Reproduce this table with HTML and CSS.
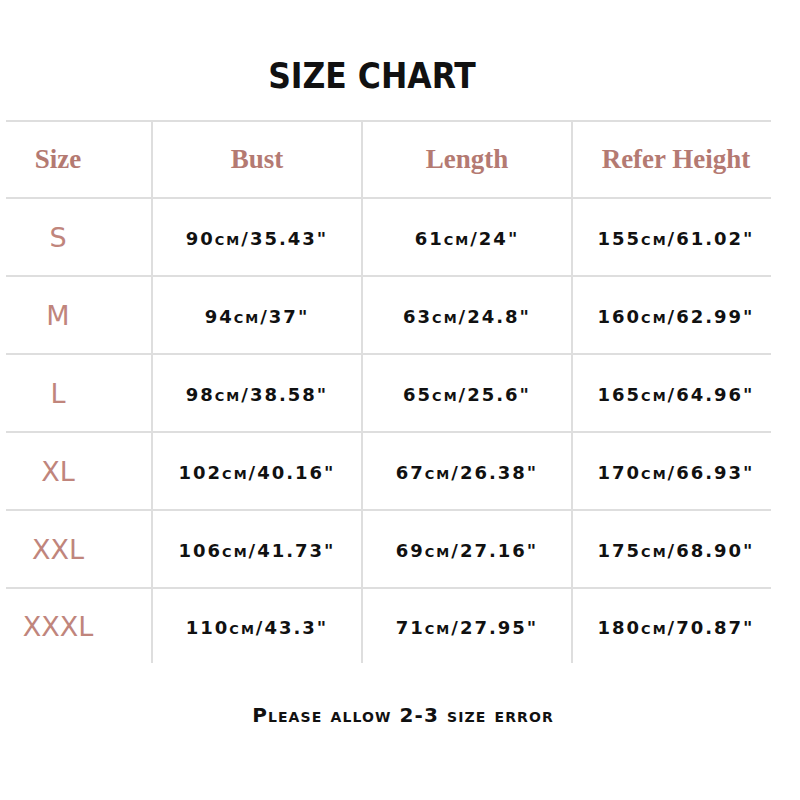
FILE: index.html
```html
<!DOCTYPE html>
<html>
<head>
<meta charset="utf-8">
<link rel="stylesheet" href="styles.css">
</head>
<body>
<div class="page">
  <h1 class="title">SIZE CHART</h1>
  <div class="chart">
    <div class="row head">
      <div class="cell c1">Size</div>
      <div class="cell">Bust</div>
      <div class="cell">Length</div>
      <div class="cell c4">Refer Height</div>
    </div>
    <div class="row">
      <div class="cell c1 size">S</div>
      <div class="cell">90cm/35.43"</div>
      <div class="cell">61cm/24"</div>
      <div class="cell c4">155cm/61.02"</div>
    </div>
    <div class="row">
      <div class="cell c1 size">M</div>
      <div class="cell">94cm/37"</div>
      <div class="cell">63cm/24.8"</div>
      <div class="cell c4">160cm/62.99"</div>
    </div>
    <div class="row">
      <div class="cell c1 size">L</div>
      <div class="cell">98cm/38.58"</div>
      <div class="cell">65cm/25.6"</div>
      <div class="cell c4">165cm/64.96"</div>
    </div>
    <div class="row">
      <div class="cell c1 size">XL</div>
      <div class="cell">102cm/40.16"</div>
      <div class="cell">67cm/26.38"</div>
      <div class="cell c4">170cm/66.93"</div>
    </div>
    <div class="row">
      <div class="cell c1 size">XXL</div>
      <div class="cell">106cm/41.73"</div>
      <div class="cell">69cm/27.16"</div>
      <div class="cell c4">175cm/68.90"</div>
    </div>
    <div class="row last">
      <div class="cell c1 size">XXXL</div>
      <div class="cell">110cm/43.3"</div>
      <div class="cell">71cm/27.95"</div>
      <div class="cell c4">180cm/70.87"</div>
    </div>
  </div>
  <p class="note">Please allow 2-3 size error</p>
</div>
</body>
</html>
```
FILE: styles.css
```css
html, body {
  margin: 0;
  padding: 0;
  background: #ffffff;
}

.page {
  width: 800px;
  padding-top: 57px;
}

.title {
  margin: 0;
  text-align: center;
  font-family: "DejaVu Sans Condensed", "DejaVu Sans", sans-serif;
  font-stretch: condensed;
  font-weight: bold;
  font-size: 35px;
  line-height: 39px;
  color: #111;
  padding-right: 56px;
}

.chart {
  margin: 24px 0 0 6px;
  width: 765px;
}

.row {
  display: grid;
  grid-template-columns: 145px 210px 210px 200px;
  height: 78px;
  border-top: 2px solid #dedede;
  box-sizing: border-box;
}

.row.head {
  height: 77px;
}

.row.last {
  height: 76px;
}

.cell {
  display: flex;
  align-items: center;
  justify-content: center;
  border-left: 2px solid #dedede;
  font-family: "DejaVu Sans", sans-serif;
  font-weight: bold;
  font-size: 18px;
  font-variant: small-caps;
  letter-spacing: 2px;
  color: #111;
  white-space: nowrap;
  padding-top: 2px;
}

.cell.c1 {
  border-left: none;
  padding-right: 41px;
}

.cell.c4 {
  padding-left: 8px;
}

.head .cell {
  font-family: "Liberation Serif", serif;
  font-variant: normal;
  font-weight: bold;
  font-size: 27px;
  letter-spacing: 0;
  color: #b47a72;
  padding-top: 0;
}

.cell.size {
  font-family: "DejaVu Sans", sans-serif;
  font-variant: normal;
  font-weight: normal;
  font-size: 27px;
  letter-spacing: 0;
  color: #c0857c;
  padding-top: 0;
}

.note {
  margin: 40px 0 0 0;
  padding-left: 6px;
  text-align: center;
  font-family: "DejaVu Sans", sans-serif;
  font-weight: bold;
  font-variant: small-caps;
  font-size: 20px;
  line-height: 24px;
  letter-spacing: 1.1px;
  color: #111;
}
```
